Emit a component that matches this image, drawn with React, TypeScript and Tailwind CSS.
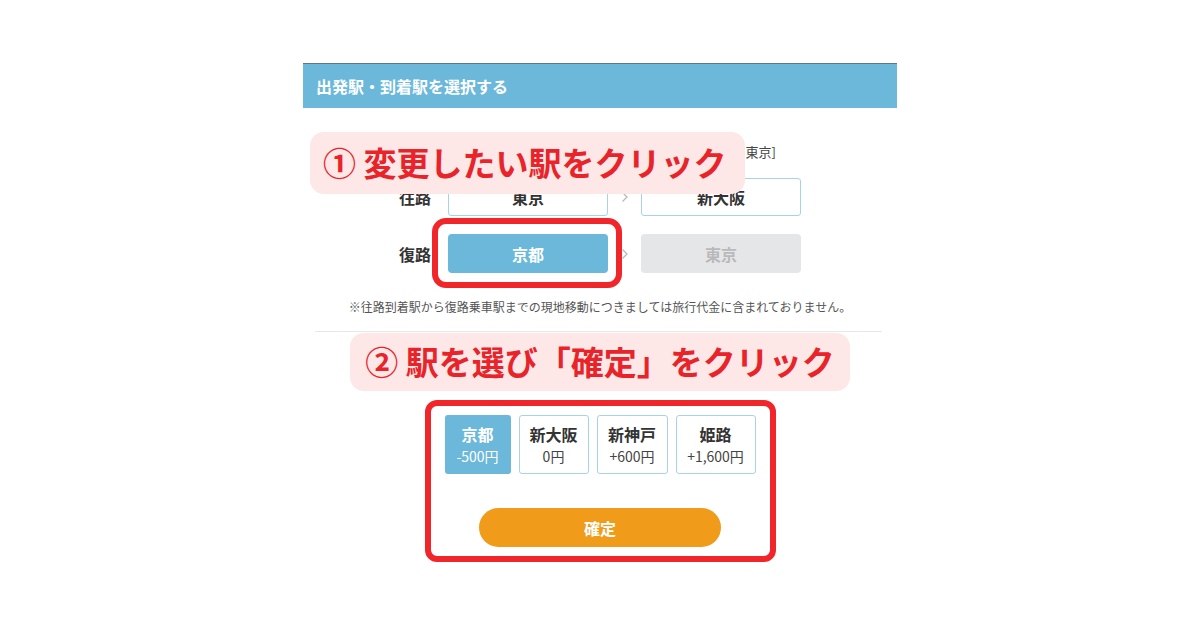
import React from "react";

const stations = [
  { name: "京都", price: "-500円", w: "w-[66px]", active: true },
  { name: "新大阪", price: "0円", w: "w-[70px]", active: false },
  { name: "新神戸", price: "+600円", w: "w-[71px]", active: false },
  { name: "姫路", price: "+1,600円", w: "w-[80px]", active: false },
];

function Chevron() {
  return (
    <span className="flex w-[33px] items-center justify-center">
      <svg width="8" height="12" viewBox="0 0 8 12" fill="none">
        <path d="M1.5 1.5L6 6L1.5 10.5" stroke="#b8b8b8" strokeWidth="1.3" />
      </svg>
    </span>
  );
}

export default function App() {
  return (
    <div
      className="min-h-[630px] w-full bg-white"
      style={{ fontFamily: '"Noto Sans CJK JP", "Noto Sans", sans-serif' }}
    >
      <div className="relative mx-auto w-[594px] pt-[63px]">
        {/* Header */}
        <div className="flex h-[45px] items-center border-t border-[#66757f] bg-[#6cb8da] pl-[13px] text-[16px] font-bold text-white">
          出発駅・到着駅を選択する
        </div>

        {/* Route summary */}
        <div className="mt-[34px] flex justify-end pr-[121px] text-[13px] leading-[20px] text-[#444]">
          [往路：東京 → 新大阪　復路：京都 → 東京]
        </div>

        {/* Rows */}
        <div className="mt-[16px] flex flex-col gap-[18px]">
          <div className="flex items-center justify-center">
            <span className="w-[32px] text-[16px] font-bold text-[#333]">往路</span>
            <div className="ml-[17px] flex h-[38px] w-[160px] items-center justify-center rounded-[3px] border border-[#a8d3e7] text-[16px] font-bold text-[#333]">
              東京
            </div>
            <Chevron />
            <div className="flex h-[38px] w-[160px] items-center justify-center rounded-[3px] border border-[#a8d3e7] text-[16px] font-bold text-[#333]">
              新大阪
            </div>
          </div>
          <div className="flex items-center justify-center">
            <span className="w-[32px] text-[16px] font-bold text-[#333]">復路</span>
            <div className="ml-[17px] flex h-[39px] w-[160px] items-center justify-center rounded-[4px] bg-[#6cb8da] text-[16px] font-bold text-white">
              京都
            </div>
            <Chevron />
            <div className="flex h-[39px] w-[160px] items-center justify-center rounded-[4px] bg-[#e5e6e8] text-[16px] font-bold text-[#b9b9b9]">
              東京
            </div>
          </div>
        </div>

        {/* Note */}
        <p className="mt-[25px] text-center text-[12px] leading-[18px] text-[#555]">
          ※往路到着駅から復路乗車駅までの現地移動につきましては旅行代金に含まれておりません。
        </p>

        <div className="mt-[15px] ml-[12px] mr-[15px] h-px bg-[#e8e8e8]" />

        {/* Station picker */}
        <div className="mx-auto mt-[68px] w-[351px] rounded-[12px] border-[6px] border-[#f0262b] bg-white pt-[9px] pb-[9px]">
          <div className="flex justify-center gap-[8px]">
            {stations.map((s) => (
              <div
                key={s.name}
                className={`flex h-[59px] ${s.w} flex-col items-center justify-center rounded-[3px] ${
                  s.active ? "bg-[#6cb8da] text-white" : "border border-[#a8d3e7] text-[#333]"
                }`}
              >
                <span className="text-[16px] font-bold leading-[23px]">{s.name}</span>
                <span className={`text-[14px] leading-[21px] ${s.active ? "text-white" : "text-[#444]"}`}>
                  {s.price}
                </span>
              </div>
            ))}
          </div>
          <div className="mt-[34px] flex justify-center">
            <button className="flex h-[39px] w-[242px] items-center justify-center rounded-full bg-[#f09c1a] text-[16px] font-bold text-white">
              確定
            </button>
          </div>
        </div>

        {/* Overlays */}
        <div className="absolute left-[129px] top-[218px] h-[70px] w-[190px] rounded-[14px] border-[6px] border-[#f0262b]" />

        <div className="absolute left-[7px] top-[132px] flex h-[62px] w-[435px] items-center rounded-[14px] bg-[#fde7e7] pl-[13px] text-[33px] font-bold text-[#e8242a]">
          ① 変更したい駅をクリック
        </div>

        <div className="absolute left-[47px] top-[333px] flex h-[58px] w-[500px] items-center justify-center rounded-[14px] bg-[#fde7e7] text-[33px] font-bold text-[#e8242a]">
          ② 駅を選び「確定」をクリック
        </div>
      </div>
    </div>
  );
}
